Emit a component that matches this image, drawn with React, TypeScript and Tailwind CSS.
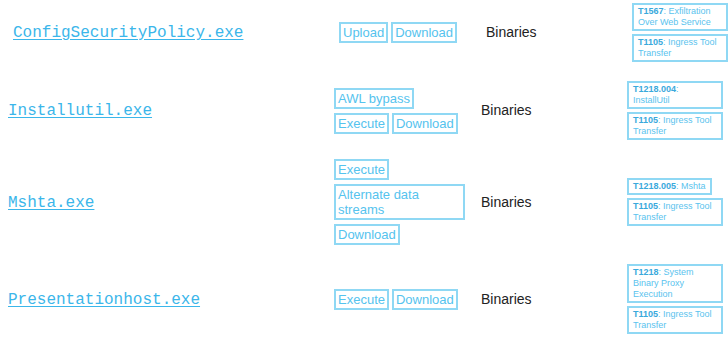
import React from 'react';

type Technique = { id: string; name: string };
type Row = { name: string; functions: string[][]; techniques: Technique[]; shift?: boolean };

const rows: Row[] = [
  {
    name: 'ConfigSecurityPolicy.exe',
    functions: [['Upload', 'Download']],
    techniques: [
      { id: 'T1567', name: 'Exfiltration Over Web Service' },
      { id: 'T1105', name: 'Ingress Tool Transfer' },
    ],
    shift: true,
  },
  {
    name: 'Installutil.exe',
    functions: [['AWL bypass'], ['Execute', 'Download']],
    techniques: [
      { id: 'T1218.004', name: 'InstallUtil' },
      { id: 'T1105', name: 'Ingress Tool Transfer' },
    ],
  },
  {
    name: 'Mshta.exe',
    functions: [['Execute'], ['Alternate data streams'], ['Download']],
    techniques: [
      { id: 'T1218.005', name: 'Mshta' },
      { id: 'T1105', name: 'Ingress Tool Transfer' },
    ],
  },
  {
    name: 'Presentationhost.exe',
    functions: [['Execute', 'Download']],
    techniques: [
      { id: 'T1218', name: 'System Binary Proxy Execution' },
      { id: 'T1105', name: 'Ingress Tool Transfer' },
    ],
  },
];

function Tag({ label }: { label: string }) {
  return (
    <a
      href="#"
      className="block border-2 border-[#8fd8f4] px-[2px] py-px text-[13px] leading-[15px] text-[#55c3ee]"
    >
      {label}
    </a>
  );
}

export default function App() {
  return (
    <div className="min-h-screen bg-white font-['Liberation_Sans',Arial,sans-serif]">
      <div className="flex flex-col gap-[19px] pt-[3px]">
        {rows.map((row) => (
          <div key={row.name} className={`flex items-center ${row.shift ? 'ml-[5px]' : ''}`}>
            {/* Name */}
            <div className="w-[334px] shrink-0 pl-2">
              <a
                href="#"
                className="font-['Liberation_Mono',monospace] text-[16px] text-[#3bb6ea] underline underline-offset-2"
              >
                {row.name}
              </a>
            </div>

            {/* Functions */}
            <div className="flex w-[147px] shrink-0 flex-col gap-[4px]">
              {row.functions.map((line, i) => (
                <div key={i} className="flex w-[131px] items-start gap-[3px]">
                  {line.map((f) => (
                    <Tag key={f} label={f} />
                  ))}
                </div>
              ))}
            </div>

            {/* Type */}
            <div className="w-[146px] shrink-0 text-[14px] text-[#222]">Binaries</div>

            {/* ATT&CK */}
            <div className="flex flex-1 flex-col items-start gap-[3px]">
              {row.techniques.map((t) => (
                <a
                  key={t.id}
                  href="#"
                  className="block max-w-[96px] border-2 border-[#8fd8f4] px-[4px] py-px text-[9px] leading-[11px] text-[#5ac3ee]"
                >
                  <span className="font-bold text-[#3aa9dc]">{t.id}</span>: {t.name}
                </a>
              ))}
            </div>
          </div>
        ))}
      </div>
    </div>
  );
}
